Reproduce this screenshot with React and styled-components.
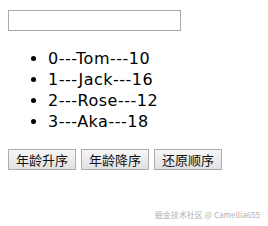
import React, { useState } from 'react'
import styled, { createGlobalStyle } from 'styled-components'

const GlobalStyle = createGlobalStyle`
    body {
        margin: 8px;
        background: #fff;
        font-family: "DejaVu Sans", "Noto Sans CJK SC", sans-serif;
        color: #000;
    }
`

const initial = [
    { id: 0, name: 'Tom', age: 10 },
    { id: 1, name: 'Jack', age: 16 },
    { id: 2, name: 'Rose', age: 12 },
    { id: 3, name: 'Aka', age: 18 },
]

function App() {
    const [text, setText] = useState('')
    const [order, setOrder] = useState(0)

    let list = initial.filter(p => p.name.indexOf(text) !== -1)
    if (order === 1) list = [...list].sort((a, b) => a.age - b.age)
    if (order === 2) list = [...list].sort((a, b) => b.age - a.age)

    return (
        <>
            <GlobalStyle />
            <Page>
                <Search value={text} onChange={e => setText(e.target.value)} />
                <List>
                    {list.map(p => (
                        <Item key={p.id}>{p.id}---{p.name}---{p.age}</Item>
                    ))}
                </List>
                <Btns>
                    <Btn onClick={() => setOrder(1)}>年龄升序</Btn>
                    <Btn onClick={() => setOrder(2)}>年龄降序</Btn>
                    <Btn onClick={() => setOrder(0)}>还原顺序</Btn>
                </Btns>
            </Page>
            <Mark>掘金技术社区 @ Camellia655</Mark>
        </>
    )
}

export default App

const Page = styled.div`
    padding-top: 2px;
`

const Search = styled.input`
    display: block;
    box-sizing: border-box;
    width: 173px;
    height: 21px;
    margin: 0;
    border: 1px solid #a9a9a9;
    outline: none;
    padding: 1px 2px;
    font-size: 13px;
`

const List = styled.ul`
    margin: 17px 0 17px;
    padding-left: 40px;
    font-size: 16px;
    line-height: 21px;
    letter-spacing: 0.5px;
`

const Item = styled.li`
    padding-left: 0;
`

const Btns = styled.div`
    display: flex;
    gap: 5px;
`

const Btn = styled.button`
    box-sizing: border-box;
    width: 68px;
    height: 21px;
    padding: 0;
    margin: 0;
    border: 1px solid #adadad;
    background: linear-gradient(#f6f6f6, #e1e1e1);
    font-family: "Noto Sans CJK SC", sans-serif;
    font-size: 13px;
    line-height: 17px;
    color: #111;
`

const Mark = styled.div`
    position: absolute;
    right: 8px;
    bottom: 6px;
    font-family: "Noto Sans CJK SC", sans-serif;
    font-size: 8px;
    color: #b0b0b0;
`
